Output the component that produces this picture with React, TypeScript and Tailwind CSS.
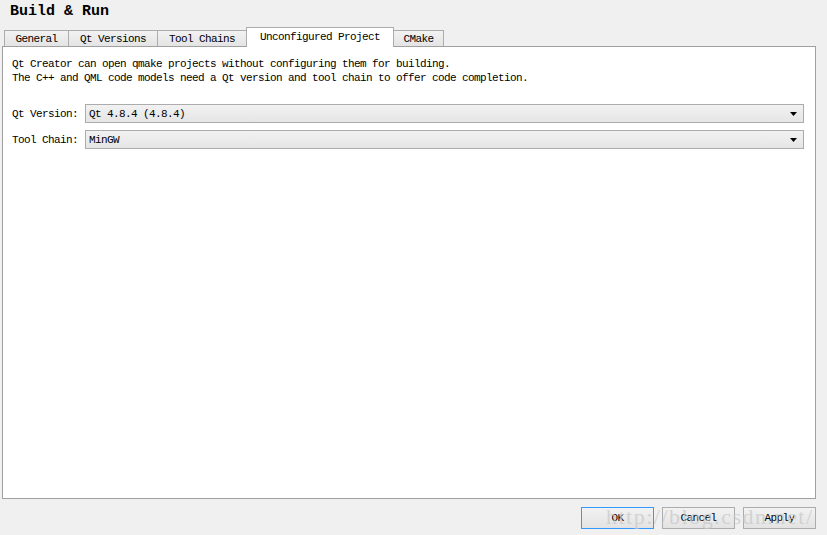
import React from "react";

function Tab({ label, w, selected }: { label: string; w: string; selected?: boolean }) {
  if (selected) {
    return (
      <div
        className={`${w} h-[20px] -mb-px -ml-px relative z-10 bg-white border border-b-0 border-[#acacac] flex items-center justify-center text-[11px] tracking-[-0.6px] text-black whitespace-nowrap`}
      >
        <span className="-mt-[1px]">{label}</span>
      </div>
    );
  }
  return (
    <div
      className={`${w} h-[16px] -ml-px first:ml-0 border border-b-0 border-[#acacac] bg-gradient-to-b from-[#f2f2f2] to-[#e4e4e4] flex items-center justify-center text-[11px] tracking-[-0.6px] text-black whitespace-nowrap`}
    >
      <span className="mt-[1px]">{label}</span>
    </div>
  );
}

function Combo({ value }: { value: string }) {
  return (
    <div className="flex-1 h-[19px] border border-[#acacac] bg-gradient-to-b from-[#f2f2f2] to-[#e5e5e5] flex items-center pl-[3px] pr-[6px]">
      <span className="flex-1 whitespace-nowrap">{value}</span>
      <svg width="7" height="4" viewBox="0 0 7 4" className="mt-[1px]">
        <polygon points="0,0 7,0 3.5,4" fill="#000" />
      </svg>
    </div>
  );
}

function Btn({ label, focused }: { label: string; focused?: boolean }) {
  return (
    <div
      className={`w-[73px] h-[22px] border ${
        focused ? "border-[#3399ff]" : "border-[#acacac]"
      } bg-gradient-to-b from-[#f2f2f2] to-[#e3e3e3] flex items-center justify-center text-[11px] tracking-[-0.6px] text-black`}
    >
      {label}
    </div>
  );
}

export default function App() {
  return (
    <div
      className="w-[827px] h-[535px] bg-[#f0f0f0] relative overflow-hidden flex flex-col text-black"
      style={{ fontFamily: '"Liberation Mono", "DejaVu Sans Mono", monospace' }}
    >
      <div className="h-[27px] pl-[10px] pt-[3px] text-[15px] font-bold leading-[18px]">Build &amp; Run</div>
      <div className="flex items-end pl-[4px] h-[19px]">
        <Tab label="General" w="w-[65px]" />
        <Tab label="Qt Versions" w="w-[90px]" />
        <Tab label="Tool Chains" w="w-[90px]" />
        <Tab label="Unconfigured Project" w="w-[148px]" selected />
        <Tab label="CMake" w="w-[51px]" />
      </div>
      <div className="ml-[2px] w-[814px] h-[453px] bg-white border border-[#a0a0a0] pl-[9px] pr-[11px] pt-[10px] text-[11px] tracking-[-0.6px] leading-[14px]">
        <div className="whitespace-nowrap">Qt Creator can open qmake projects without configuring them for building.</div>
        <div className="whitespace-nowrap">The C++ and QML code models need a Qt version and tool chain to offer code completion.</div>
        <div className="mt-[19px] flex flex-col gap-[7px]">
          <div className="flex items-center">
            <div className="w-[73px] shrink-0 whitespace-nowrap">Qt Version:</div>
            <Combo value="Qt 4.8.4 (4.8.4)" />
          </div>
          <div className="flex items-center">
            <div className="w-[73px] shrink-0 whitespace-nowrap">Tool Chain:</div>
            <Combo value="MinGW" />
          </div>
        </div>
      </div>
      <div className="flex justify-end gap-[8px] pr-[11px] mt-[8px]">
        <Btn label="OK" focused />
        <Btn label="Cancel" />
        <Btn label="Apply" />
      </div>
      <div
        className="absolute left-[606px] top-[503px] text-[22px] leading-[28px] tracking-[1.5px] text-[#c8c8c8] opacity-70 pointer-events-none"
        style={{ fontFamily: '"Liberation Serif", serif' }}
      >
        http://blog.csdn.net/
      </div>
    </div>
  );
}
